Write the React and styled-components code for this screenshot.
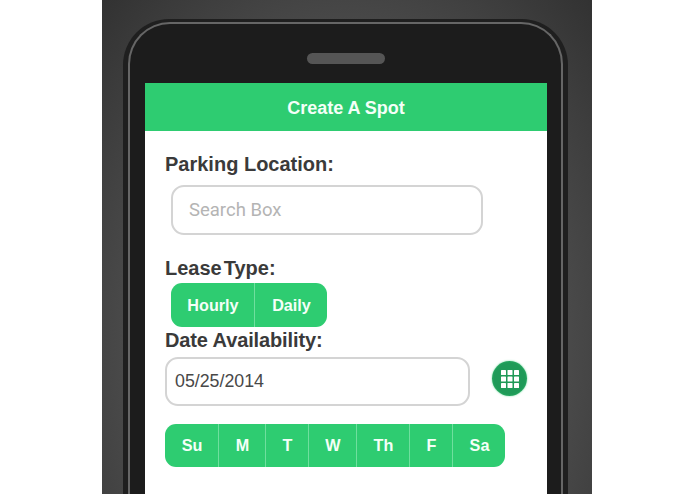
import { createGlobalStyle, styled } from "styled-components";

const GlobalStyle = createGlobalStyle`
  html, body {
    margin: 0;
    padding: 0;
    height: 100%;
    overflow: hidden;
    background: #fff;
    font-family: "Liberation Sans", Arial, sans-serif;
  }
`;

const days = ["Su", "M", "T", "W", "Th", "F", "Sa"];
const dayWidths = [53, 47, 43, 48, 53, 43, 53];

const App = () => {
  return (
    <>
      <GlobalStyle />
      <Backdrop>
        <Phone>
          <Bezel>
            <Speaker />
            <Screen>
              <Header>Create A Spot</Header>
              <Content>
                <Label>Parking Location:</Label>
                <SearchInput placeholder="Search Box" readOnly />
                <LeaseLabel>
                  Lease<span>Type:</span>
                </LeaseLabel>
                <LeaseGroup>
                  <Segment $width={83}>Hourly</Segment>
                  <Segment $width={73}>Daily</Segment>
                </LeaseGroup>
                <DateLabel>Date Availability:</DateLabel>
                <DateRow>
                  <DateInput value="05/25/2014" readOnly />
                  <CalendarButton>
                    <svg width="18" height="18" viewBox="0 0 18 18" fill="#fff">
                      {[0, 6.5, 13].map((y) =>
                        [0, 6.5, 13].map((x) => (
                          <rect key={`${x}-${y}`} x={x} y={y} width="5" height="5" rx="0.6" />
                        ))
                      )}
                    </svg>
                  </CalendarButton>
                </DateRow>
                <DayGroup>
                  {days.map((day, i) => (
                    <Segment key={day} $width={dayWidths[i]}>
                      {day}
                    </Segment>
                  ))}
                </DayGroup>
              </Content>
            </Screen>
          </Bezel>
        </Phone>
      </Backdrop>
    </>
  );
};

export default App;

const Backdrop = styled.div`
  width: 490px;
  height: 494px;
  margin-left: 102px;
  padding: 19px 24px 0 21px;
  box-sizing: border-box;
  overflow: hidden;
  background: radial-gradient(ellipse at 50% 70%, #626262 0%, #4c4c4c 60%, #323232 100%);
`;

const Phone = styled.div`
  height: 520px;
  box-sizing: border-box;
  background: #1f1f1f;
  border-radius: 46px 46px 0 0;
  padding: 3px 5px 0 5px;
`;

const Bezel = styled.div`
  height: 100%;
  box-sizing: border-box;
  background: #1c1c1c;
  border: solid #666;
  border-width: 2px 2px 0 2px;
  border-radius: 42px 42px 0 0;
  padding: 29px 14px 0 15px;
`;

const Speaker = styled.div`
  width: 78px;
  height: 11px;
  margin: 0 auto 0;
  border-radius: 6px;
  background: #555;
`;

const Screen = styled.div`
  height: 460px;
  margin-top: 19px;
  background: #fff;
`;

const Header = styled.div`
  height: 48px;
  padding-top: 2px;
  box-sizing: border-box;
  display: flex;
  align-items: center;
  justify-content: center;
  background: #2ecc71;
  color: #f4fff8;
  font-size: 18px;
  font-weight: 700;
`;

const Content = styled.div`
  padding: 22px 0 0 20px;
  display: flex;
  flex-direction: column;
  align-items: flex-start;
`;

const Label = styled.div`
  font-size: 20px;
  line-height: 22px;
  font-weight: 700;
  color: #3a3a3a;
`;

const LeaseLabel = styled(Label)`
  margin-top: 22px;

  span {
    margin-left: 2px;
  }
`;

const DateLabel = styled(Label)`
  margin-top: 2px;
  letter-spacing: -0.12px;
`;

const SearchInput = styled.input`
  display: block;
  width: 312px;
  height: 50px;
  margin: 10px 0 0 6px;
  padding: 0 16px 0;
  box-sizing: border-box;
  border: 2px solid #d4d4d4;
  border-radius: 13px;
  background: #fff;
  outline: none;
  font-family: Roboto, "Liberation Sans", sans-serif;
  font-size: 18.5px;

  &::placeholder {
    color: #b4b4b4;
    opacity: 1;
  }
`;

const DateRow = styled.div`
  display: flex;
  align-items: center;
  margin-top: 6px;
`;

const DateInput = styled.input`
  width: 305px;
  height: 49px;
  padding: 0 8px;
  box-sizing: border-box;
  border: 2px solid #d4d4d4;
  border-radius: 13px;
  background: #fff;
  outline: none;
  color: #484848;
  font-family: "Liberation Sans", Arial, sans-serif;
  font-size: 17.8px;
`;

const CalendarButton = styled.div`
  width: 35px;
  height: 35px;
  margin-left: 22px;
  margin-top: -6px;
  display: flex;
  align-items: center;
  justify-content: center;
  border-radius: 50%;
  background: radial-gradient(circle, #1f9a58 0%, #1f9a58 62%, #2ecc71 100%);
  box-shadow: 0 0 2px rgba(46, 204, 113, 0.7);
`;

const LeaseGroup = styled.div`
  display: flex;
  height: 44px;
  margin: 4px 0 0 6px;
  border-radius: 11px;
  overflow: hidden;
  background: #2ecc71;
`;

const DayGroup = styled(LeaseGroup)`
  height: 43px;
  margin: 18px 0 0 0;
`;

const Segment = styled.div`
  width: ${(props) => props.$width}px;
  display: flex;
  align-items: center;
  justify-content: center;
  box-sizing: border-box;
  padding-left: 1px;
  color: #f4fff8;
  font-size: 16.2px;
  font-weight: 700;

  & + & {
    border-left: 1px solid #6fdf9e;
  }
`;
